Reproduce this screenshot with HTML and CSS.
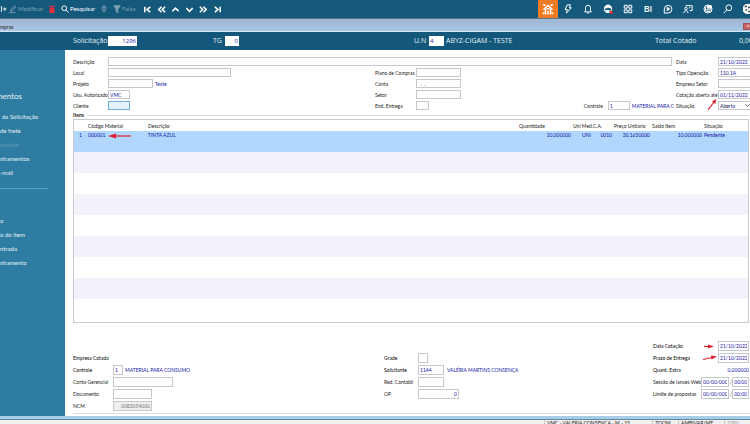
FILE: index.html
```html
<!DOCTYPE html>
<html lang="pt-BR">
<head>
    <meta charset="UTF-8">
    <title>Compras</title>
    <link rel="stylesheet" href="styles.css">
</head>
<body>
    <header class="toolbar">
        <div class="tools">
            <button class="tool tool-new" aria-label="Novo"><svg viewBox="0 0 8 10"><path d="M0 2h1v6H0M3 5h4M5 3v4"/></svg></button>
            <button class="tool tool-edit dim"><svg viewBox="0 0 10 10"><path d="M2 8l1-3 4-4 1.500 1.500-4 4zM0 9.500h8"/></svg>Modificar</button>
            <button class="tool tool-delete" aria-label="Excluir"><svg viewBox="0 0 10 10"><path class="red" d="M2 3h6v7H2zM1.500 1h7v1.200h-7z"/></svg></button>
            <button class="tool tool-search"><svg viewBox="0 0 10 10"><circle cx="4" cy="4" r="3"/><path d="M6.200 6.200L9.500 9.500"/></svg>Pesquisar</button>
            <button class="tool tool-pin dim" aria-label="Localizar"><svg viewBox="0 0 10 10"><path d="M5 9.500V7.500M3.500 7C2 5 2 1 5 1s3 4 1.500 6z"/><circle cx="5" cy="3.500" r="1"/></svg></button>
            <button class="tool tool-range dim"><svg viewBox="0 0 10 10"><path class="solid" d="M1 1h8L6 5v5L4 8V5z"/></svg>Faixa</button>
            <nav class="pager">
                <button aria-label="Primeiro"><svg viewBox="0 0 10 10"><path d="M2 2v6M8 2L4.500 5 8 8"/></svg></button>
                <button aria-label="Voltar página"><svg viewBox="0 0 10 10"><path d="M5 2L2 5l3 3M9 2L6 5l3 3"/></svg></button>
                <button aria-label="Anterior"><svg viewBox="0 0 10 10"><path d="M1.500 7L5 3.500 8.500 7"/></svg></button>
                <button aria-label="Próximo"><svg viewBox="0 0 10 10"><path d="M1.500 3.500L5 7l3.500-3.500"/></svg></button>
                <button aria-label="Avançar página"><svg viewBox="0 0 10 10"><path d="M1 2l3 3-3 3M5 2l3 3-3 3"/></svg></button>
                <button aria-label="Último"><svg viewBox="0 0 10 10"><path d="M2 2l3.500 3L2 8M8 2v6"/></svg></button>
            </nav>
        </div>
        <nav class="apps">
            <button class="home" aria-label="Início"><svg viewBox="0 0 12 12"><path d="M1.500 6.500L6 2.500l4.500 4M3.500 6v5.500M8.500 6v5.500M6 8v3.500M1 1.500l2.500 1M11 1.500l-2.500 1M1 11l1.200-1.500M11 11L9.800 9.500M4.500 5.800h3"/></svg></button>
            <button aria-label="Ações"><svg viewBox="0 0 12 12"><path d="M5 1h4L7.500 4.500H10L4 11l1.200-4.500H2.500z"/></svg></button>
            <button aria-label="Avisos"><svg viewBox="0 0 12 12"><path d="M2 9.500h8L9 8V4.500a3 3 0 0 0-6 0V8zM5 11h2"/></svg></button>
            <button aria-label="Atendimento"><svg viewBox="0 0 12 12"><circle cx="6" cy="6" r="4.500"/><path class="solid" d="M2 5c1-5 7-5 8 0L7 4zM3 8h5l-2 2z"/><circle class="red" cx="10" cy="10" r="2"/></svg></button>
            <button aria-label="Módulos"><svg viewBox="0 0 12 12"><path d="M1.500 1.500h3.500v3.500H1.500zM7 1.500h3.500v3.500H7zM1.500 7h3.500v3.500H1.500zM7 7h3.500v3.500H7z"/></svg></button>
            <button class="bi">BI</button>
            <button aria-label="Vídeos"><svg viewBox="0 0 12 12"><path d="M1.500 11V6A4.600 4.600 0 1 1 6 10.800z"/><path class="solid" d="M5 4l3 2-3 2z"/></svg></button>
            <button aria-label="Treinamento"><svg viewBox="0 0 12 12"><path d="M3 2h8v6H8M1 11c0-4 5-4 5 0M7 5l2-1"/><circle cx="3.500" cy="5.500" r="1.500"/></svg></button>
            <button aria-label="Portal"><svg viewBox="0 0 12 12"><circle cx="6" cy="6" r="4.800"/><path class="solid" d="M5 2h5v3H5z"/><path d="M2 7h8M4 9h5M3 4v4"/></svg></button>
            <button aria-label="Buscar"><svg viewBox="0 0 12 12"><circle cx="7" cy="4.500" r="3.500"/><path d="M4.500 7L1 11"/></svg></button>
            <button aria-label="Usuário"><svg viewBox="0 0 12 12"><circle class="solid" cx="6" cy="6" r="6"/><path class="dark" d="M1 4l3-3 1 3zM3 6h2v2H3zM6 3h3v2H6zM6 8h3v2H6z"/></svg></button>
        </nav>
    </header>

    <div class="titlebar"><span>mpras</span><button class="close" aria-label="Fechar">×</button></div>

    <div class="heading">
        <label class="h-sol" for="solicitacao">Solicitação</label><input class="num w-29" id="solicitacao" value="1296">
        <label class="h-tg" for="tg">TG</label><input class="num w-14" id="tg" value="0">
        <label class="h-un" for="un">U.N</label><input class="w-15" id="un" value="4">
        <span class="company">ABYZ-CIGAM - TESTE</span>
        <span class="total">Total Cotado</span><span class="total-value">0,00</span>
    </div>

    <div class="workspace">
        <aside class="sidebar">
            <h2>mentos</h2>
            <a href="#" class="indent">da Solicitação</a>
            <a href="#">de frete</a>
            <a href="#" class="off">elidade</a>
            <a href="#">nhamentos</a>
            <a href="#">-mail</a>
            <hr>
            <a href="#">o</a>
            <a href="#">o do item</a>
            <a href="#">ntrada</a>
            <a href="#">nhamento</a>
        </aside>

        <main>
            <form class="request">
                <div class="request-main">
                    <div class="wide-row"><label for="descricao">Descrição</label><input id="descricao"></div>
                    <div class="pair-row">
                        <label for="local">Local</label><div class="cell"><input class="w-123" id="local"></div>
                        <label for="plano">Plano de Compras</label><div class="cell"><input class="w-45" id="plano"></div>
                    </div>
                    <div class="pair-row">
                        <label for="projeto">Projeto</label><div class="cell"><input class="w-45" id="projeto"><span class="value">Teste</span></div>
                        <label for="conta">Conta</label><div class="cell"><input class="w-45" id="conta" value="&nbsp; .&nbsp; ."></div>
                    </div>
                    <div class="pair-row">
                        <label for="usuario">Usu. Autorizado</label><div class="cell"><input class="w-22" id="usuario" value="VMC"></div>
                        <label for="setor">Setor</label><div class="cell"><input class="w-45" id="setor"></div>
                    </div>
                    <div class="pair-row">
                        <label for="cliente">Cliente</label><div class="cell"><input class="w-22 active" id="cliente"></div>
                        <label for="entrega">End. Entrega</label>
                        <div class="cell"><input class="w-13" id="entrega">
                            <div class="control"><label for="controle">Controle</label><input class="w-22" id="controle" value="1"><span class="value">MATERIAL PARA C</span></div>
                        </div>
                    </div>
                </div>
                <div class="request-side">
                    <label for="data">Data</label><input id="data" value="21/10/2022">
                    <label for="tipo">Tipo Operação</label><input id="tipo" value="110.1A">
                    <label for="empresa">Empresa Setor</label><input id="empresa">
                    <label for="aberta">Cotação aberta até</label><input id="aberta" value="01/11/2022">
                    <label for="situacao">Situação</label>
                    <div class="cell"><select id="situacao"><option>Aberta</option></select><svg class="chevron" viewBox="0 0 6 4"><path d="M0 .5L3 3 6 .5"/></svg></div>
                    <svg class="arrow arrow-open" viewBox="0 0 10 13"><path d="M1 12L7 4"/><path class="head" d="M9 1L8.500 6 5 3.500z"/></svg>
                </div>
            </form>

            <fieldset>
                <legend>Itens</legend>
                <div class="grid-box">
                    <table>
                        <thead>
                            <tr><th class="c-n"></th><th class="c-cod">Código Material</th><th>Descrição</th><th class="c-qtd">Quantidade</th><th class="c-uni">Uni Med.</th><th class="c-ca">C.A.</th><th class="c-preco">Preço Unitário</th><th class="c-saldo">Saldo Item</th><th class="c-sit">Situação</th></tr>
                        </thead>
                        <tbody>
                            <tr class="selected"><td class="line-no">1</td><td class="code">000001<svg class="arrow arrow-code" viewBox="0 0 24 6"><path d="M6 3h17"/><path class="head" d="M0 3l8-2.500v5z"/></svg></td><td>TINTA AZUL</td><td class="right">10,000000</td><td class="right">UNI</td><td class="right">0010</td><td class="right">30,1650000</td><td class="right">10,000000</td><td>Pendente</td></tr>
                            <tr><td colspan="9"></td></tr>
                            <tr><td colspan="9"></td></tr>
                            <tr><td colspan="9"></td></tr>
                            <tr><td colspan="9"></td></tr>
                            <tr><td colspan="9"></td></tr>
                            <tr><td colspan="9"></td></tr>
                            <tr><td colspan="9"></td></tr>
                            <tr><td colspan="9"></td></tr>
                        </tbody>
                    </table>
                </div>
            </fieldset>

            <form class="details">
                <div class="first">
                    <div class="row"><span class="name strong">Empresa Cotada</span></div>
                    <div class="row"><label class="strong" for="controle2">Controle</label><input class="w-10" id="controle2" value="1"><span class="value">MATERIAL PARA CONSUMO</span></div>
                    <div class="row"><label for="gerencial">Conta Gerencial</label><input class="w-60" id="gerencial"></div>
                    <div class="row"><label for="documento">Documento</label><input class="w-39" id="documento"></div>
                    <div class="row"><label for="ncm">NCM</label><input class="w-39 num locked" id="ncm" value="0082054000" readonly></div>
                </div>
                <div class="second">
                    <div class="row"><label class="strong" for="grade">Grade</label><input class="w-10" id="grade"></div>
                    <div class="row"><label class="strong" for="solicitante">Solicitante</label><input class="w-26" id="solicitante" value="1144"><span class="value">VALÉRIA MARTINS CONSENÇA</span></div>
                    <div class="row"><label for="contabil">Red. Contábil</label><input class="w-26" id="contabil"></div>
                    <div class="row"><label for="op">OP</label><input class="w-41 num" id="op" value="0"></div>
                </div>
                <div class="third">
                    <div class="row"><label class="strong" for="cotacao">Data Cotação</label><svg class="arrow arrow-quote" viewBox="0 0 10 5"><path d="M0 2.500h5"/><path class="head" d="M10 2.500l-6-2v4z"/></svg><input class="w-31" id="cotacao" value="21/10/2022"></div>
                    <div class="row"><label class="strong" for="prazo">Prazo de Entrega</label><svg class="arrow arrow-due" viewBox="0 0 14 6"><path d="M0 4.500L9 2.500"/><path class="head" d="M14 1.500L8 .5l.5 4z"/></svg><input class="w-31" id="prazo" value="21/10/2022"></div>
                    <div class="row"><span class="name strong">Quant. Extra</span><span class="value">0,000000</span></div>
                    <div class="row"><label for="lances">Sessão de lances Web</label><input class="w-28" id="lances" value="00/00/0000"><i>/</i><input class="w-17 num" aria-label="Hora dos lances" value="00:00"></div>
                    <div class="row"><label for="propostas">Limite de propostas</label><input class="w-28" id="propostas" value="00/00/0000"><i>/</i><input class="w-17 num" aria-label="Hora das propostas" value="00:00"></div>
                </div>
            </form>
        </main>
    </div>

    <footer>
        <span class="s-user">VMC - VALERIA CONSENCA - M - 15</span>
        <span class="s-zoom">ZOOM</span>
        <span class="s-env">AMBIVAR/ME</span>
        <span class="s-size">1280</span>
    </footer>
</body>
</html>
```
FILE: styles.css
```css
* {
    box-sizing: border-box;
}

body {
    margin: 0;
    height: 100vh;
    overflow: hidden;
    display: flex;
    flex-direction: column;
    background: #fff;
    color: #222;
    font-family: Lato, "Liberation Sans", sans-serif;
    font-size: 5px;
    line-height: 8px;
}

button, input, select {
    font: inherit;
    color: inherit;
    padding: 0;
    border: none;
    border-radius: 0;
    background: none;
}

input, select {
    height: 9px;
    padding: 0 1px;
    border: 1px solid #c4c8cc;
    background: #fff;
    color: #1818a8;
    min-width: 0;
    flex: none;
}

label, span, td, th {
    white-space: nowrap;
}

svg {
    flex: none;
    fill: none;
    stroke: currentColor;
    stroke-width: 1.2;
}

.solid { fill: currentColor; }
.red { fill: #e8303c; stroke: none; }
.dark { fill: #4a5560; stroke: none; }

.num { text-align: right; }
.w-10 { width: 10px; }
.w-13 { width: 13px; }
.w-14 { width: 14px; }
.w-15 { width: 15px; }
.w-17 { width: 17px; }
.w-22 { width: 22px; }
.w-26 { width: 26px; }
.w-28 { width: 28px; }
.w-29 { width: 29px; }
.w-31 { width: 31px; }
.w-39 { width: 39px; }
.w-41 { width: 41px; }
.w-45 { width: 45px; }
.w-60 { width: 60px; }
.w-123 { width: 123px; }

/* top toolbar */
.toolbar {
    flex: none;
    height: 19px;
    display: flex;
    justify-content: space-between;
    background: #14597b;
    border-bottom: 1px solid #58788e;
    color: #fff;
    font-size: 6px;
}

.tools {
    display: flex;
    align-items: center;
}

.tool {
    display: flex;
    align-items: center;
    gap: 1px;
}

.tool svg { width: 8px; height: 8px; }
.tool-new { width: 9px; }
.tool-edit { width: 39px; }
.tool-delete { width: 13px; }
.tool-search { width: 39px; }
.tool-pin { width: 13px; }
.tool-range { width: 27px; }
.dim { color: #7fa2b5; }

.pager {
    display: flex;
}

.pager button {
    width: 14px;
    display: flex;
    justify-content: center;
}

.pager svg {
    width: 9px;
    height: 9px;
    stroke-width: 1.8;
}

.apps {
    display: flex;
    margin-right: -8px;
}

.apps button {
    width: 20px;
    height: 18px;
    display: flex;
    align-items: center;
    justify-content: center;
}

.apps svg { width: 10px; height: 10px; }
.apps .home { background: #f07a22; }

.apps .home svg {
    width: 12px;
    height: 12px;
    stroke-width: 1.5;
}

.apps .bi {
    font-family: "Open Sans", sans-serif;
    font-size: 9px;
    font-weight: 600;
}

.titlebar {
    flex: none;
    height: 13px;
    display: flex;
    align-items: center;
    justify-content: space-between;
    padding-top: 3px;
    background: linear-gradient(#9fb5d4, #a9c8e3);
    border-bottom: 1px solid #d7e6f2;
    color: #222;
}

.close {
    width: 10px;
    height: 7px;
    margin-right: -3px;
    border: 1px solid #a05058;
    background: #c85f62;
    color: #fff;
    line-height: 5px;
}

/* request number band */
.heading {
    flex: none;
    height: 18px;
    display: flex;
    align-items: center;
    background: #13587a;
    color: #e6f0f5;
    font-family: "Open Sans", sans-serif;
    font-size: 7px;
    padding-left: 73px;
}

.heading input {
    height: 10px;
    border: none;
    font-size: 6px;
}

.h-sol { width: 35px; }
.h-tg { width: 12px; margin-left: 76px; }
.h-un { width: 15px; margin-left: 175px; }
.company { margin-left: 2px; }
.total { margin-left: auto; width: 84px; }
.total-value { width: 11px; }

.workspace {
    flex: 1;
    min-height: 0;
    display: flex;
}

/* left menu */
.sidebar {
    flex: none;
    width: 65px;
    padding-top: 39px;
    overflow: hidden;
    background: #2f7ca2;
    color: #e6f1f6;
    font-size: 6px;
}

.sidebar h2 {
    margin: 0 0 7px;
    font-size: 8px;
    font-weight: normal;
    line-height: 14px;
    text-indent: -4px;
}

.sidebar a {
    display: block;
    line-height: 14px;
    color: inherit;
    text-decoration: none;
}

.sidebar .indent { padding-left: 2px; }
.sidebar .off { color: #6196b2; }

.sidebar hr {
    width: 48px;
    margin: 8px 0 25px;
    border: none;
    border-top: 1px solid #55a5c8;
}

main {
    flex: 1;
    min-width: 0;
    display: flex;
    flex-direction: column;
    padding: 6px 0 2px 8px;
}

/* request form */
.request {
    display: flex;
    gap: 4px;
}

.request-main {
    flex: 1;
    min-width: 0;
}

.wide-row, .pair-row {
    height: 11px;
    display: grid;
    align-items: center;
}

.wide-row { grid-template-columns: 35px 1fr; }
.pair-row { grid-template-columns: 35px 267px 41px 1fr; }

.cell, .control {
    display: flex;
    align-items: center;
}

.control { margin: 0 -2px 0 auto; }
.control label { width: 24px; }

.value {
    color: #1818a8;
    margin-left: 2px;
}

.active {
    background: #e5f1fb;
    border-color: #6aaede;
}

.request-side {
    position: relative;
    display: grid;
    grid-template-columns: 42px 32px;
    grid-auto-rows: 11px;
    align-items: center;
}

.request-side input { border-right: none; }

.request-side select {
    appearance: none;
    width: 32px;
    border-right: none;
    color: #111160;
}

.chevron {
    width: 5px;
    height: 3px;
    margin-left: -5px;
    stroke: #555;
}

.arrow {
    stroke: #dd2030;
    stroke-width: 1.2;
}

.arrow .head {
    fill: #dd2030;
    stroke: none;
}

.arrow-open {
    position: absolute;
    left: 31px;
    top: 42px;
    width: 10px;
    height: 13px;
}

/* items grid */
fieldset {
    margin: 1px 0 0;
    padding: 0 1px 0 0;
    border: none;
    min-width: 0;
}

legend {
    width: 100%;
    display: flex;
    align-items: center;
    gap: 3px;
    padding: 0;
    font-weight: bold;
    line-height: 7px;
}

legend::after {
    content: "";
    flex: 1;
    border-top: 1px solid #dcdcdc;
}

.grid-box {
    border: 1px solid #c8ccd0;
    padding-bottom: 2px;
}

table {
    width: 100%;
    table-layout: fixed;
    border-collapse: collapse;
}

th {
    height: 11px;
    padding: 0;
    font-weight: normal;
    text-align: left;
}

td {
    height: 21px;
    padding: 0;
    vertical-align: top;
    color: #1414a0;
}

tbody tr:nth-child(even) { background: #f2f2fa; }
tbody .selected { background: #b1d7ff; }

.c-n { width: 14px; }
.c-cod { width: 60px; }
.c-qtd { width: 54px; }
.c-uni { width: 20px; }
.c-ca { width: 21px; }
.c-preco { width: 38px; }
.c-saldo { width: 52px; }
.c-sit { width: 44px; }
.right { text-align: right; padding-right: 2px; }
.line-no { padding-left: 5px; }
.code { position: relative; }

.arrow-code {
    position: absolute;
    left: 20px;
    top: 2px;
    width: 24px;
    height: 6px;
}

/* lower form */
.details {
    margin-top: auto;
    display: flex;
    align-items: flex-start;
    padding-bottom: 1px;
    border-bottom: 1px solid #dcdcdc;
}

.row {
    height: 12px;
    display: flex;
    align-items: center;
}

.first { width: 311px; padding-top: 12px; }
.second { flex: 1; padding-top: 12px; }
.third { width: 97px; padding-right: 1px; }
.first label { width: 40px; }
.second label { width: 34px; }
.third label, .third .name { width: 48px; }
.third .value { margin: 0 0 0 auto; }
.third input:last-child { margin-left: auto; }
.third i { margin-left: 1px; }
.second .value { margin-left: 3px; }
.strong { color: #000; }
.details input { height: 10px; }

.locked {
    background: #f0f0f0;
    color: #777;
}

.arrow-quote {
    width: 10px;
    height: 5px;
    margin-left: 3px;
}

.arrow-due {
    width: 14px;
    height: 6px;
    margin-left: 2px;
}

/* status strip */
footer {
    flex: none;
    height: 8px;
    display: flex;
    padding-left: 544px;
    border-top: 3px solid #a9cde6;
    background: linear-gradient(#5c8ba5 1px, #f0f0f0 1px);
    overflow: hidden;
    line-height: 7px;
}

footer span {
    margin-top: 1px;
    padding-left: 2px;
    border-left: 1px solid #c8c8c8;
}

.s-user { width: 108px; }
.s-zoom { width: 26px; }
.s-env { width: 46px; }
.s-size { color: #999; }
```
